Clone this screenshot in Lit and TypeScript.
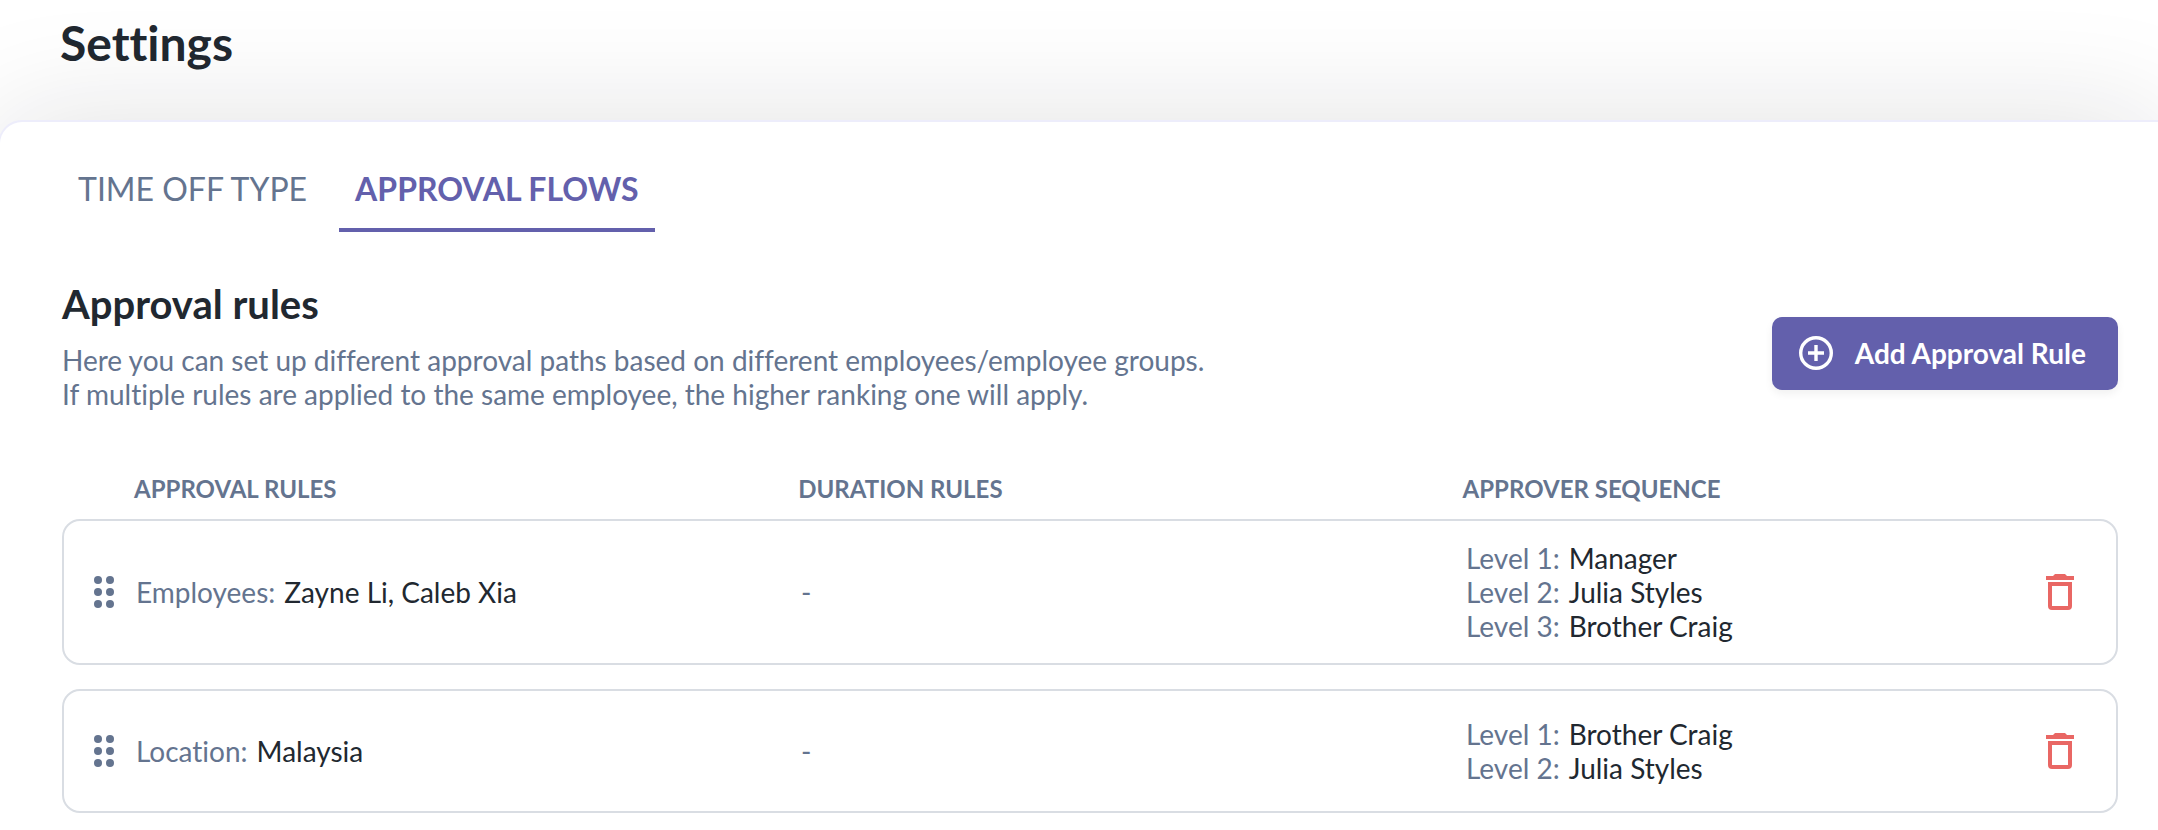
import { LitElement, html, css, svg } from "lit";
import { customElement, state } from "lit/decorators.js";

interface Approver {
  level: number;
  name: string;
}

interface Rule {
  kind: string;
  value: string;
  duration: string;
  approvers: Approver[];
}

const RULES: Rule[] = [
  {
    kind: "Employees",
    value: "Zayne Li, Caleb Xia",
    duration: "-",
    approvers: [
      { level: 1, name: "Manager" },
      { level: 2, name: "Julia Styles" },
      { level: 3, name: "Brother Craig" },
    ],
  },
  {
    kind: "Location",
    value: "Malaysia",
    duration: "-",
    approvers: [
      { level: 1, name: "Brother Craig" },
      { level: 2, name: "Julia Styles" },
    ],
  },
];

const TABS = ["TIME OFF TYPE", "APPROVAL FLOWS"];

@customElement("approval-rules")
export class ApprovalRules extends LitElement {
  static styles = css`
    :host {
      display: block;
    }
    .table,
    .body {
      display: flex;
      flex-direction: column;
    }
    .table {
      gap: 16px;
    }
    .body {
      gap: 24px;
    }
    .head {
      display: block;
    }
    .row {
      display: grid;
      grid-template-columns: 42px 133fr 133fr 116fr 28px;
      align-items: center;
      padding: 20px 42px 20px 30px;
    }
    .titles {
      padding: 0 48px 0 30px;
    }
    .card {
      min-height: 80px;
      border: 2px solid #d9dde3;
      border-radius: 18px;
      background: #fff;
    }
    .title,
    .cell {
      padding: 0;
      text-align: left;
    }
    .title {
      font-size: 24px;
      line-height: 29px;
      font-weight: 700;
      color: #64748f;
    }
    .cell {
      font-size: 28px;
      line-height: 34px;
      color: #64748f;
    }
    .pair {
      display: flex;
      gap: 9px;
    }
    .value {
      color: #212830;
    }
    .icon-button {
      display: block;
      padding: 0;
      border: 0;
      background: none;
      color: #64748f;
      cursor: pointer;
    }
    .grip {
      cursor: grab;
    }
    .danger {
      color: #e96764;
    }
    .icon {
      display: block;
    }
    .sequence {
      margin: 0;
      padding: 0;
      list-style: none;
    }
  `;

  render() {
    return html`
      <table class="table" role="table" aria-label="Approval rules">
        <thead class="head" role="rowgroup">
          <tr class="row titles" role="row">
            <td></td>
            <th class="title" role="columnheader" scope="col">APPROVAL RULES</th>
            <th class="title" role="columnheader" scope="col">DURATION RULES</th>
            <th class="title" role="columnheader" scope="col">APPROVER SEQUENCE</th>
            <td></td>
          </tr>
        </thead>
        <tbody class="body" role="rowgroup">
          ${RULES.map((rule) => this.renderRule(rule))}
        </tbody>
      </table>
    `;
  }

  private renderRule(rule: Rule) {
    return html`
      <tr class="row card" role="row">
        <td class="cell" role="cell">
          <button class="icon-button grip" type="button" aria-label="Reorder rule">
            <svg class="icon" width="20" height="32" viewBox="0 0 20 32" fill="currentColor">
              ${[4, 16, 28].map(
                (y) => svg`<circle cx="4" cy=${y} r="4"></circle><circle cx="16" cy=${y} r="4"></circle>`,
              )}
            </svg>
          </button>
        </td>
        <td class="cell" role="cell">
          <div class="pair"><span>${rule.kind}:</span><span class="value">${rule.value}</span></div>
        </td>
        <td class="cell" role="cell">${rule.duration}</td>
        <td class="cell" role="cell">
          <ul class="sequence">
            ${rule.approvers.map(
              (a) => html`<li class="pair"><span>Level ${a.level}:</span><span class="value">${a.name}</span></li>`,
            )}
          </ul>
        </td>
        <td class="cell" role="cell">
          <button class="icon-button danger" type="button" aria-label="Delete rule">
            <svg class="icon" width="28" height="36" viewBox="0 0 28 36" fill="none">
              <path d="M0 2h7l2-2h10l2 2h7v4H0z" fill="currentColor"></path>
              <path
                d="M2 8h24v24a4 4 0 0 1-4 4H6a4 4 0 0 1-4-4zM6 12v20h16V12z"
                fill="currentColor"
                fill-rule="evenodd"
              ></path>
            </svg>
          </button>
        </td>
      </tr>
    `;
  }
}

@customElement("app-root")
export class AppRoot extends LitElement {
  @state() private active = 1;

  static styles = css`
    :host {
      display: flex;
      flex-direction: column;
      min-height: 100vh;
      box-sizing: border-box;
      overflow: hidden;
      background: #fff;
      font-family: Lato, sans-serif;
      font-variant-ligatures: none;
      color: #212830;
    }
    .topbar {
      padding: 14px 60px 48px;
    }
    .page-title,
    .section-title,
    .note {
      margin: 0;
    }
    .page-title {
      font-size: 48px;
      line-height: 58px;
      font-weight: 700;
    }
    .panel {
      flex: 1;
      margin: 0 -2px;
      padding: 38px 40px 16px 62px;
      border: 2px solid #ededfb;
      border-bottom: 0;
      border-radius: 24px 0 0 0;
      background: #fff;
      box-shadow: 0 0 120px rgba(20, 20, 30, 0.13);
    }
    .tabs {
      display: flex;
      gap: 16px;
    }
    .tab {
      padding: 9px 16px 20px;
      border: 0;
      border-bottom: 4px solid transparent;
      background: none;
      font: inherit;
      font-size: 32px;
      line-height: 39px;
      color: #64748f;
      cursor: pointer;
    }
    .tab[aria-selected="true"] {
      border-bottom-color: #6360ac;
      font-weight: 700;
      color: #6360ac;
    }
    .intro {
      display: flex;
      align-items: flex-end;
      justify-content: space-between;
      gap: 32px;
      margin: 48px 0 63px;
    }
    .section-title {
      font-size: 40px;
      line-height: 48px;
      font-weight: 700;
    }
    .note {
      margin-top: 15px;
      font-size: 28px;
      line-height: 34px;
      color: #64748f;
    }
    .add {
      display: flex;
      flex: none;
      align-items: center;
      gap: 19px;
      margin-bottom: 21px;
      padding: 16px 32px 17px 24px;
      border: 0;
      border-radius: 10px;
      background: #6360ac;
      box-shadow: 0 4px 8px rgba(0, 0, 0, 0.06);
      font: inherit;
      font-size: 28px;
      line-height: 34px;
      font-weight: 700;
      color: #fff;
      cursor: pointer;
    }
    .add-icon {
      display: block;
    }
  `;

  render() {
    return html`
      <header class="topbar"><h1 class="page-title">Settings</h1></header>
      <main class="panel">
        <div class="tabs" role="tablist">
          ${TABS.map(
            (label, i) => html`<button
              class="tab"
              type="button"
              role="tab"
              aria-selected=${this.active === i ? "true" : "false"}
              @click=${() => (this.active = i)}
            >${label}</button>`,
          )}
        </div>
        <section>
          <div class="intro">
            <div>
              <h2 class="section-title">Approval rules</h2>
              <p class="note">
                Here you can set up different approval paths based on different employees/employee groups.<br />
                If multiple rules are applied to the same employee, the higher ranking one will apply.
              </p>
            </div>
            <button class="add" type="button">
              <svg class="add-icon" width="40" height="40" viewBox="0 0 40 40" fill="none" stroke="currentColor">
                <circle cx="20" cy="20" r="15.3" stroke-width="3.4"></circle>
                <path d="M20 12v16M12 20h16" stroke-width="3.4"></path>
              </svg>
              Add Approval Rule
            </button>
          </div>
          <approval-rules></approval-rules>
        </section>
      </main>
    `;
  }
}
